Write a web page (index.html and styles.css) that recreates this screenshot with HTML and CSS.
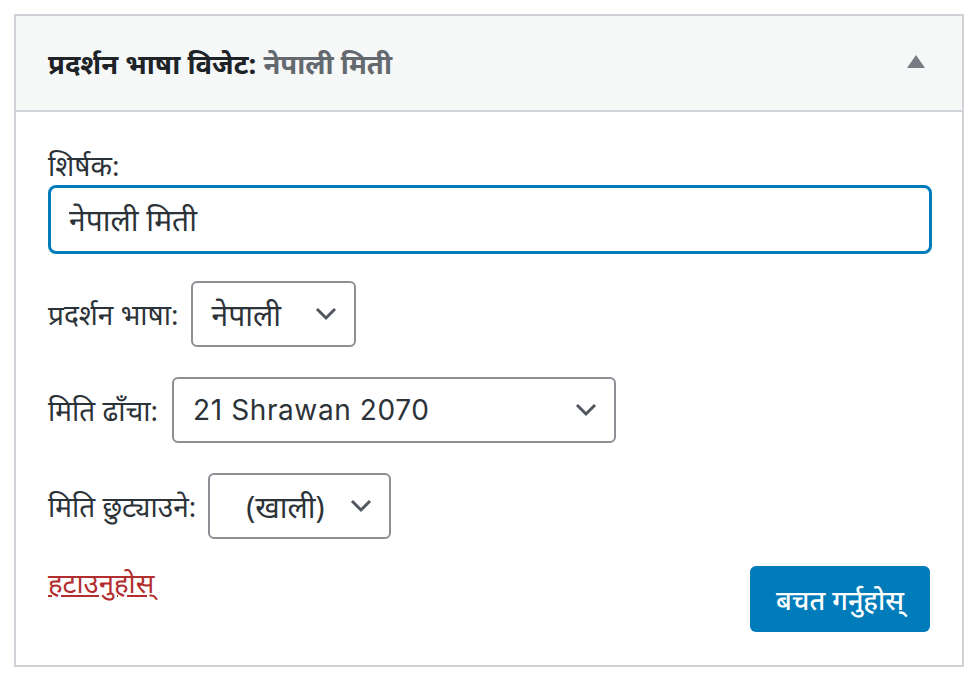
FILE: index.html
```html
<!DOCTYPE html>
<html lang="ne">
<head>
<meta charset="utf-8">
<link rel="stylesheet" href="styles.css">
</head>
<body>
<div class="widget">
  <div class="widget-top">
    <h3 class="widget-title"><span class="strong">प्रदर्शन भाषा विजेट:</span> <span class="in-widget-title">नेपाली मिती</span></h3>
    <span class="toggle"><svg width="18" height="13" viewBox="0 0 18 13"><polygon points="9,0 18,13 0,13" fill="#787c82"/></svg></span>
  </div>
  <div class="widget-inside">
    <p class="field-title">
      <label class="lbl-block">शिर्षक:</label>
      <input class="text-input" type="text" value="नेपाली मिती">
    </p>
    <p class="field-row">
      <label class="lbl">प्रदर्शन भाषा:</label>
      <span class="select s1"><span class="sel-text">नेपाली</span><svg class="chev" width="22" height="14" viewBox="0 0 22 14"><polyline points="2,2 11,11 20,2" fill="none" stroke="#50575e" stroke-width="3"/></svg></span>
    </p>
    <p class="field-row">
      <label class="lbl">मिति ढाँचा:</label>
      <span class="select s2"><span class="sel-text latin">21 Shrawan 2070</span><svg class="chev" width="22" height="14" viewBox="0 0 22 14"><polyline points="2,2 11,11 20,2" fill="none" stroke="#50575e" stroke-width="3"/></svg></span>
    </p>
    <p class="field-row">
      <label class="lbl">मिति छुट्याउने:</label>
      <span class="select s3"><span class="sel-text">(खाली)</span><svg class="chev" width="22" height="14" viewBox="0 0 22 14"><polyline points="2,2 11,11 20,2" fill="none" stroke="#50575e" stroke-width="3"/></svg></span>
    </p>
    <div class="widget-actions">
      <a class="delete" href="#">हटाउनुहोस्</a>
      <button class="save" type="button">बचत गर्नुहोस्</button>
    </div>
  </div>
</div>
</body>
</html>
```

FILE: styles.css
```css
html, body {
  margin: 0;
  padding: 0;
  background: #ffffff;
}
body {
  font-family: "Noto Sans", "Noto Sans Devanagari", Roboto, sans-serif;
  color: #2c3338;
  font-size: 28px;
}
.widget {
  margin: 14px 0 0 14px;
  width: 950px;
  height: 653px;
  box-sizing: border-box;
  border: 2px solid #cfd2d6;
  background: #fff;
  display: flex;
  flex-direction: column;
}
.widget-top {
  height: 94px;
  flex: none;
  background: #f6f7f7;
  border-bottom: 2px solid #cfd2d6;
  display: flex;
  align-items: center;
  justify-content: space-between;
  padding: 0 37px 0 32px;
}
.widget-title {
  margin: 0;
  font-size: 27.5px;
  font-weight: 700;
  color: #1d2327;
}
.in-widget-title {
  color: #646970;
}
.toggle {
  display: flex;
  margin-top: -4px;
}
.widget-inside {
  padding: 0 30px 0 32px;
  flex: 1;
  display: flex;
  flex-direction: column;
}
.field-title {
  margin: 35px 0 0;
  display: flex;
  flex-direction: column;
}
.lbl-block {
  line-height: 36px;
  color: #2c3338;
}
.text-input {
  margin-top: 2px;
  height: 69px;
  box-sizing: border-box;
  border: 3px solid #007cba;
  border-radius: 8px;
  padding: 0 18px;
  font-family: inherit;
  font-size: 30px;
  color: #2c3338;
  outline: none;
}
.field-row {
  margin: 27px 0 0;
  display: flex;
  align-items: center;
  gap: 12px;
  height: 66px;
}
.field-row + .field-row {
  margin-top: 30px;
}
.field-row .lbl {
  color: #2c3338;
}
.wide-gap {
  gap: 14px;
}
.select {
  height: 66px;
  box-sizing: border-box;
  border: 2px solid #8c8f94;
  border-radius: 6px;
  display: flex;
  align-items: center;
  justify-content: space-between;
  padding: 0 17px 0 19px;
  font-size: 30px;
  color: #2c3338;
}
.s1 { width: 165px; }
.s2 { width: 444px; margin-left: 2px; }
.s3 { width: 183px; padding-left: 36px; }
.latin {
  font-family: Inter, Roboto, sans-serif;
  font-size: 28px;
  letter-spacing: 0.6px;
}
.chev { flex: none; }
.widget-actions {
  margin-top: 27px;
  display: flex;
  justify-content: space-between;
  align-items: flex-start;
}
.delete {
  color: #b32d2e;
  text-decoration: underline;
  font-size: 27.5px;
  margin-top: -2px;
}
.save {
  width: 180px;
  height: 66px;
  margin: 0 2px 0 0;
  border: none;
  border-radius: 6px;
  background: #007cba;
  color: #fff;
  font-family: inherit;
  font-size: 27px;
  font-weight: 500;
  padding: 0;
}
```
